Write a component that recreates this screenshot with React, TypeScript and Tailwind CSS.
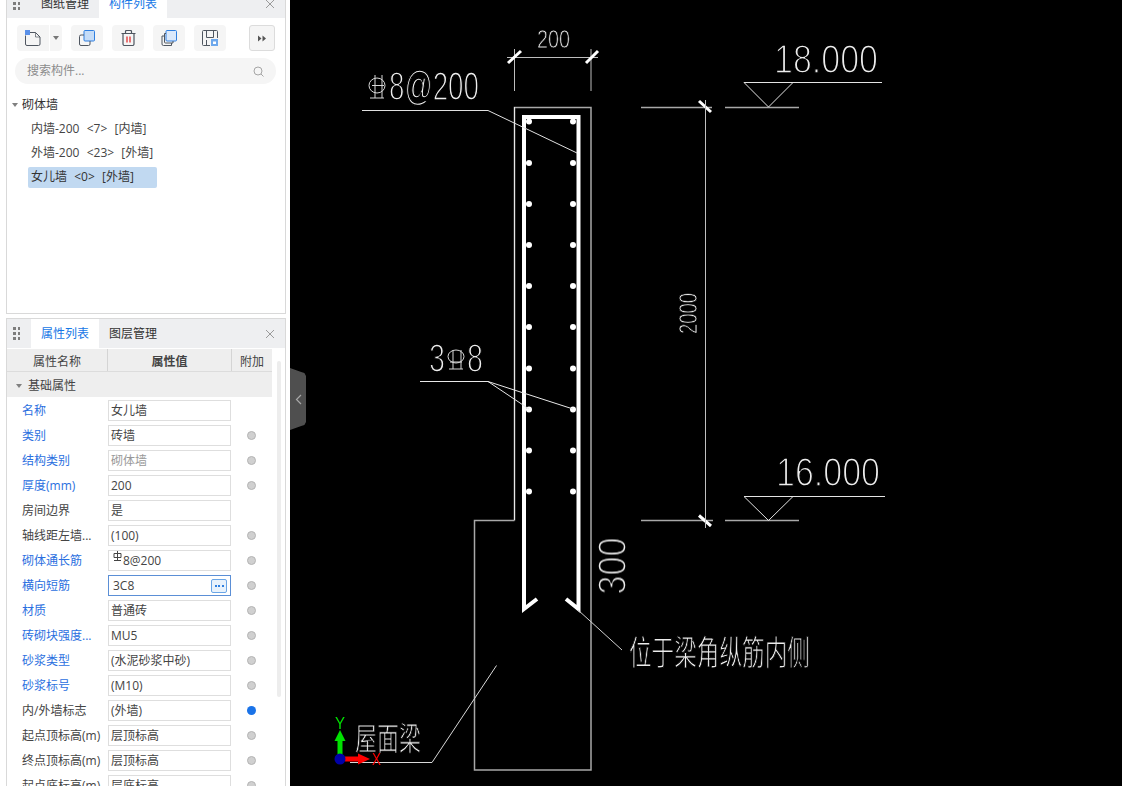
const cjk = { fontFamily: '"Open Sans","Noto Sans CJK SC",sans-serif' };
const cad = '"Liberation Sans","Noto Sans CJK SC",sans-serif';

function Grip() {
  return (
    <div className="grid grid-cols-2 gap-x-[2px] gap-y-[2px] w-[7px] shrink-0">
      {[0, 1, 2, 3, 4, 5].map((i) => (
        <span key={i} className="w-[2.5px] h-[3px] bg-[#7d7d7d]" />
      ))}
    </div>
  );
}

function CloseX() {
  return (
    <svg width="10" height="10" viewBox="0 0 10 10" className="text-[#9a9a9a]">
      <path d="M1 1l8 8M9 1l-8 8" stroke="currentColor" fill="none" strokeWidth="1" />
    </svg>
  );
}

function Btn({ children }: { children: React.ReactNode }) {
  return (
    <div className="w-[32px] h-[26px] rounded-[4px] bg-[#f5f5f5] flex items-center justify-center">
      {children}
    </div>
  );
}

function Header({ a, b, active }: { a: string; b: string; active: 0 | 1 }) {
  return (
    <div className="h-[29px] bg-[#eeeff1] flex items-center shrink-0">
      <div className="pl-[6px] w-[24px]"><Grip /></div>
      <div className={`w-[68px] h-full flex items-center justify-center text-[12px] ${active === 0 ? 'bg-white text-[#1677e6]' : 'text-[#333]'}`}>{a}</div>
      <div className={`w-[68px] h-full flex items-center justify-center text-[12px] ${active === 1 ? 'bg-white text-[#1677e6]' : 'text-[#333]'}`}>{b}</div>
      <div className="ml-auto mr-[10px] flex"><CloseX /></div>
    </div>
  );
}

type Row = { l: string; v: React.ReactNode; blue?: boolean; dot?: 'g' | 'b' | 'n'; gray?: boolean; focus?: boolean };
const rebar = (
  <svg width="9" height="11" viewBox="0 0 9 11" fill="none" className="inline-block align-[3px] ml-[2px] mr-[1px]">
    <path d="M1 2.500H8V6.500H1ZM4.500 0V9.500M1 9.500H8" stroke="#444" />
  </svg>
);
const rows: Row[] = [
  { l: '名称', v: '女儿墙', blue: true, dot: 'n' },
  { l: '类别', v: '砖墙', blue: true },
  { l: '结构类别', v: '砌体墙', blue: true, gray: true },
  { l: '厚度(mm)', v: '200', blue: true },
  { l: '房间边界', v: '是', dot: 'n' },
  { l: '轴线距左墙...', v: '(100)' },
  { l: '砌体通长筋', v: <>{rebar}8@200</>, blue: true },
  { l: '横向短筋', v: '3C8', blue: true, focus: true },
  { l: '材质', v: '普通砖', blue: true },
  { l: '砖砌块强度...', v: 'MU5', blue: true },
  { l: '砂浆类型', v: '(水泥砂浆中砂)', blue: true },
  { l: '砂浆标号', v: '(M10)', blue: true },
  { l: '内/外墙标志', v: '(外墙)', dot: 'b' },
  { l: '起点顶标高(m)', v: '层顶标高' },
  { l: '终点顶标高(m)', v: '层顶标高' },
  { l: '起点底标高(m)', v: '层底标高' },
];

function PropRow({ r }: { r: Row }) {
  return (
    <div className="h-[25px] flex items-center shrink-0">
      <div className={`w-[101px] pl-[15px] text-[12px] whitespace-nowrap ${r.blue ? 'text-[#2b6fe0]' : 'text-[#444]'}`}>{r.l}</div>
      <div className={`w-[123px] h-[21px] border flex items-center text-[12px] bg-white ${r.focus ? 'border-[#5b8fd6] pl-[4px]' : 'border-[#dedede] pl-[2px]'} ${r.gray ? 'text-[#999]' : 'text-[#444]'}`}>
        <span>{r.v}</span>
        {r.focus && (
          <span className="ml-auto mr-[3px] w-[16px] h-[14px] border border-[#6aa5e6] rounded-[2px] bg-[#e8f2fc] flex items-center justify-center gap-[1.5px]">
            <i className="w-[2px] h-[2px] bg-[#2f7fe0]" /><i className="w-[2px] h-[2px] bg-[#2f7fe0]" /><i className="w-[2px] h-[2px] bg-[#2f7fe0]" />
          </span>
        )}
      </div>
      <div className="w-[41px] flex justify-center">
        {r.dot !== 'n' && (
          <span className={`w-[9px] h-[9px] mb-[1px] rounded-full ${r.dot === 'b' ? 'bg-[#1a73e8]' : 'bg-[#d0d0d0] border border-[#b4b4b4]'}`} />
        )}
      </div>
    </div>
  );
}

function Sidebar() {
  return (
    <div className="w-[290px] h-full shrink-0 bg-white pl-[6px] pr-[4px] flex flex-col overflow-hidden" style={cjk}>
      <div className="h-[326px] -mt-[12px] shrink-0 border border-[#d9d9d9] flex flex-col">
        <Header a="图纸管理" b="构件列表" active={1} />
        <div className="flex items-center mt-[7px] ml-[10px]">
          <div className="w-[45px] h-[26px] rounded-[4px] bg-[#f5f5f5] flex items-center">
            <div className="w-[32px] flex justify-center">
              <svg width="16" height="16" viewBox="0 0 16 16" fill="none">
                <path d="M5 2.500H10.500L15 7V14a1.500 1.500 0 0 1-1.500 1.500H2A1.500 1.500 0 0 1 .500 14V5.500" stroke="#4f5660" />
                <path d="M10.500 2.500V7H15" stroke="#4f5660" strokeWidth="0.700" />
                <rect x="0" y="0" width="5" height="5" fill="#5a90e8" />
              </svg>
            </div>
            <div className="w-px h-full bg-white" />
            <div className="flex-1 flex justify-center"><span className="border-x-[3px] border-x-transparent border-t-[4px] border-t-[#777]" /></div>
          </div>
          <div className="ml-[9px]"><Btn>
            <svg width="16" height="16" viewBox="0 0 16 16" fill="none">
              <rect x="5" y="0.500" width="10.500" height="10.500" rx="1" fill="#c5dcf7" stroke="#2f7fe0" />
              <path d="M5 5H2a1.500 1.500 0 0 0-1.500 1.500V14A1.500 1.500 0 0 0 2 15.500h7.500A1.500 1.500 0 0 0 11 14V11" stroke="#4f5660" />
            </svg>
          </Btn></div>
          <div className="ml-[9px]"><Btn>
            <svg width="15" height="16" viewBox="0 0 15 16" fill="none">
              <path d="M.500 3.500h14M4.500 3.500V1.500a1 1 0 0 1 1-1h4a1 1 0 0 1 1 1v2M2 3.500V14a1.500 1.500 0 0 0 1.500 1.500h8A1.500 1.500 0 0 0 13 14V3.500" stroke="#4f5660" strokeWidth="1.200" />
              <path d="M6 6.500v6M9 6.500v6" stroke="#e02020" strokeWidth="1.200" />
            </svg>
          </Btn></div>
          <div className="ml-[9px]"><Btn>
            <svg width="16" height="16" viewBox="0 0 16 16" fill="none">
              <rect x="5" y="0.500" width="10.500" height="10.500" rx="1" fill="#dbe9fb" stroke="#2f7fe0" />
              <path d="M5 3.500H3.500v8.500a1 1 0 0 0 1 1h7.500v-2M3 6H1v8a1.500 1.500 0 0 0 1.500 1.500h8V13" stroke="#4f5660" />
            </svg>
          </Btn></div>
          <div className="ml-[9px]"><Btn>
            <svg width="16" height="16" viewBox="0 0 16 16" fill="none">
              <path d="M8 15.500H1.500a1 1 0 0 1-1-1V1.500a1 1 0 0 1 1-1h13a1 1 0 0 1 1 1V8" stroke="#4f5660" />
              <path d="M4.500 1v6.500h7V1M4.500 15V10" stroke="#4f5660" />
              <rect x="9" y="9" width="7" height="7" fill="#6ea8ec" />
              <rect x="11" y="11.500" width="3" height="2.500" fill="#fff" />
            </svg>
          </Btn></div>
          <div className="ml-[23px] w-[26px] h-[26px] rounded-[3px] border border-[#dcdcdc] bg-[#f5f5f5] flex items-center justify-center">
            <svg width="8" height="7" viewBox="0 0 8 7"><path d="M0 .5l3.500 3-3.500 3zM4.500 .5l3.500 3-3.500 3z" fill="#555" /></svg>
          </div>
        </div>
        <div className="ml-[8px] mr-[9px] mt-[7px] h-[26px] rounded-full bg-[#f5f5f5] flex items-center pl-[12px] pr-[12px] text-[12px] text-[#8c8c8c]">
          <span>搜索构件...</span>
          <svg className="ml-auto" width="11" height="11" viewBox="0 0 11 11" fill="none"><circle cx="5" cy="5" r="4" stroke="#a5a5a5" /><path d="M8 8l2.500 2.500" stroke="#a5a5a5" /></svg>
        </div>
        <div className="mt-[9px] h-[24px] flex items-center text-[12px] text-[#333] pl-[5px] whitespace-pre">
          <span className="border-x-[3px] border-x-transparent border-t-[4px] border-t-[#808080] mr-[4px]" />砌体墙
        </div>
        <div className="h-[24px] flex items-center text-[12px] text-[#444] pl-[24px] whitespace-pre [word-spacing:0.5px]">内墙-200  &lt;7&gt;  [内墙]</div>
        <div className="h-[24px] flex items-center text-[12px] text-[#444] pl-[24px] whitespace-pre [word-spacing:0.5px]">外墙-200  &lt;23&gt;  [外墙]</div>
        <div className="h-[24px] flex items-center pl-[21px]">
          <div className="w-[129px] h-[21px] rounded-[2px] bg-[#c1d9f1] pl-[3px] flex items-center text-[12px] text-[#333] whitespace-pre [word-spacing:0.5px]">女儿墙  &lt;0&gt;  [外墙]</div>
        </div>
      </div>
      <div className="mt-[4px] flex-1 min-h-0 border-x border-t border-[#d9d9d9] flex flex-col overflow-hidden">
        <Header a="属性列表" b="图层管理" active={0} />
        <div className="flex-1 min-h-0 flex">
          <div className="w-[265px] shrink-0">
            <div className="mt-[1px] h-[23px] bg-[#eeeeee] border-b border-[#dcdcdc] flex text-[12px] text-[#444]">
              <div className="w-[101px] border-r border-[#d4d4d4] flex items-center justify-center pt-[3px]">属性名称</div>
              <div className="w-[124px] border-r border-[#d4d4d4] flex items-center justify-center font-bold pt-[3px]">属性值</div>
              <div className="flex-1 flex items-center justify-center pt-[3px]">附加</div>
            </div>
            <div className="h-[25px] bg-[#eeeeee] flex items-center text-[12px] text-[#444] pl-[9px] pt-[2px]">
              <span className="border-x-[3px] border-x-transparent border-t-[4px] border-t-[#808080] mr-[6px]" />基础属性
            </div>
            <div className="pt-[1px] flex flex-col">
              {rows.map((r) => <PropRow key={r.l} r={r} />)}
            </div>
          </div>
          <div className="ml-[5px] mt-[13px] w-[4px] h-[336px] rounded-full bg-[#ededed]" />
        </div>
      </div>
    </div>
  );
}

const G = '#a8a8a8';
function T({ x, y, w, size, children, sw = 1, fill = '#f0f0f0', rotate }: { x: number; y: number; w: number; size: number; children: string; sw?: number; fill?: string; rotate?: boolean }) {
  return (
    <text
      x={rotate ? 0 : x}
      y={rotate ? 0 : y}
      transform={rotate ? `translate(${x} ${y}) rotate(-90)` : undefined}
      fontFamily={cad}
      fontSize={size}
      textLength={w}
      lengthAdjust="spacingAndGlyphs"
      fill={fill}
      stroke="#000"
      strokeWidth={sw}
    >
      {children}
    </text>
  );
}

const dotYs = [121.5, 163, 204, 245, 286, 327, 368.500, 409.500, 450.500, 491.500];

function Canvas() {
  return (
    <div className="flex-1 h-full bg-black relative">
      <svg width="832" height="786" viewBox="290 0 832 786" fill="none" className="block">
        {/* wall outline */}
        <g stroke={G} strokeWidth="1.500">
          <path d="M514.500 520.500V107.500H591V770H474.500V520.500H514.500" />
          <path d="M641 107.500H712M725 107.500H799M641 520.500H713M725 520.500H799" />
        </g>
        <path d="M514.500 107V520" stroke="#e8e8e8" />
        {/* stirrup */}
        <path d="M537 599L524 609V117H578.500V609L566 599" stroke="#fff" strokeWidth="4" />
        {dotYs.map((y) => (
          <g key={y} fill="#fff">
            <circle cx="529" cy={y} r="3" />
            <circle cx="573" cy={y} r="3" />
          </g>
        ))}
        {/* text */}
        <g className="opacity-[0.99]">
          <T x={537} y={48} w={33} size={26} sw={0.900}>200</T>
          <T x={389} y={100} w={90} size={40} sw={1.500}>8@200</T>
          <T x={429} y={372} w={16} size={40} sw={1.500}>3</T>
          <T x={467} y={372} w={16} size={40} sw={1.500}>8</T>
          <T x={774} y={72.500} w={104} size={40} sw={1.500}>18.000</T>
          <T x={776} y={486} w={104} size={40} sw={1.500}>16.000</T>
          <T x={696.500} y={334} w={41} size={26} sw={0.900} rotate>2000</T>
          <T x={626} y={594.500} w={57} size={40} sw={1.500} rotate>300</T>
          <T x={629} y={665} w={181} size={34} sw={1}>位于梁角纵筋内侧</T>
          <T x={355} y={750} w={66} size={32} sw={0.900}>屋面梁</T>
        </g>
        {/* rebar symbols */}
        <g stroke="#d8d8d8">
          <ellipse cx="377" cy="85.500" rx="8" ry="7.500" />
          <path d="M375 75V98M382 75V98M370 98H384M372 85.500H384" />
          <ellipse cx="456" cy="356.500" rx="8" ry="6.500" />
          <path d="M453 350V369M461 350V369M449 369H463M450 362H462" />
        </g>
        {/* 200 dim */}
        <path d="M507 57.500H598M514.500 49V91M591 49V91" stroke="#bdbdbd" />
        <path d="M508 63L521 51M586 63L598 51M699 101L711 112M699 515.500L711 526" stroke="#fff" strokeWidth="3" />
        <path d="M705.500 100V528" stroke="#c0c0c0" />
        {/* leaders */}
        <path d="M362 110.500H488L577 153" stroke="#e0e0e0" />
        <path d="M420 381.500H488L529 409M488 381.500L573 409" stroke="#e8e8e8" />
        <path d="M578 610L622 650" stroke="#d0d0d0" />
        <path d="M350 762.500H432L496.500 665.500" stroke="#d8d8d8" />
        {/* elevations */}
        <path d="M744 82.500H882M744 82.500L768.500 107L793 82.500" stroke="#e4e4e4" />
        <path d="M744 496.500H885M744 496.500L768.500 520.500L793 496.500" stroke="#e4e4e4" />
        {/* UCS */}
        <path d="M340 755V738" stroke="#00e000" strokeWidth="5" />
        <path d="M340 730L345.500 741H334.500Z" fill="#00e000" />
        <path d="M345 759H362" stroke="#ff0000" strokeWidth="5" />
        <path d="M370 759L358 753.500V764.500Z" fill="#ff0000" />
        <circle cx="340" cy="759" r="5.500" fill="#0000a8" />
        <text x="335" y="729" fontFamily={cad} fontSize="17" textLength="10" lengthAdjust="spacingAndGlyphs" fill="#00e000">Y</text>
        <text x="372" y="765" fontFamily={cad} fontSize="17" textLength="9" lengthAdjust="spacingAndGlyphs" fill="#ff0000">X</text>
      </svg>
      <div className="absolute left-0 top-[368px] w-[16px] h-[62px] bg-[#4f4f4f] [clip-path:polygon(0_0,70%_4px,90%_5px,100%_8px,100%_54px,90%_57px,70%_58px,0_100%)] flex items-center justify-center">
        <svg width="7" height="11" viewBox="0 0 7 11" fill="none"><path d="M6 1L1.500 5.500L6 10" stroke="#a8a8a8" strokeWidth="1.200" /></svg>
      </div>
    </div>
  );
}

export default function App() {
  return (
    <div className="w-[1122px] h-[786px] flex overflow-hidden bg-black">
      <Sidebar />
      <Canvas />
    </div>
  );
}
